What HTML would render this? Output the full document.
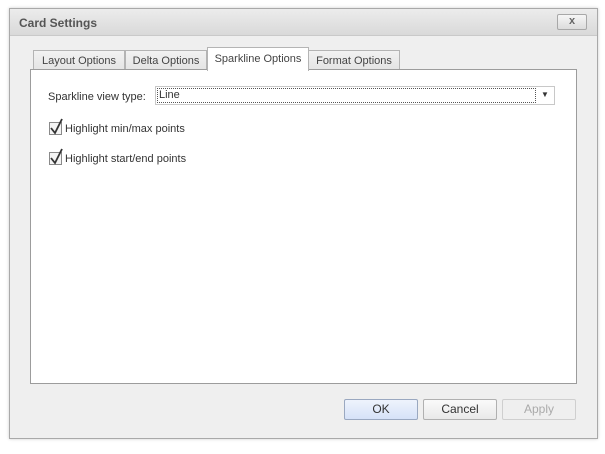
<!DOCTYPE html>
<html><head><style>
*{box-sizing:border-box;margin:0;padding:0}
body{width:605px;height:454px;background:#fff;font-family:"Liberation Sans",sans-serif;font-size:11px;color:#333;position:relative;overflow:hidden}
.abs{position:absolute}
.dlg{left:9px;top:8px;width:589px;height:431px;border:1px solid #a9a9a9;background:#efefef;box-shadow:0 0 3px #ccc}
.title{left:0;top:0;width:587px;height:27px;background:linear-gradient(#ececec,#d9d9d9);border-bottom:1px solid #c9c9c9}
.title span{position:absolute;left:9px;top:7px;font-weight:bold;font-size:12px;color:#555}
.close{left:547px;top:5px;width:30px;height:16px;border:1px solid #a8a8a8;border-radius:2px;background:linear-gradient(#f6f6f6,#dcdcdc);text-align:center;font-size:11px;line-height:13px;color:#666;font-weight:bold}
.tab{height:21px;border:1px solid #b4b4b4;border-bottom:none;background:linear-gradient(#f2f2f2,#e3e3e3);text-align:center;line-height:20px;color:#444}
.panel{left:20px;top:60px;width:547px;height:315px;background:#fff;border:1px solid #9c9c9c}
.btn{top:390px;height:21px;border:1px solid #b0b0b0;border-radius:2px;background:linear-gradient(#fafafa,#e9e9e9);text-align:center;line-height:19px;font-size:12px;color:#333}
.cb{width:13px;height:13px;border:1px solid #8a8a8a;background:#f4f4f4}
</style></head><body>
<div class="abs dlg">
 <div class="abs title"><span>Card Settings</span></div>
 <div class="abs close">x</div>
 <div class="abs tab" style="left:23px;top:41px;width:92px">Layout Options</div>
 <div class="abs tab" style="left:115px;top:41px;width:82px">Delta Options</div>
 <div class="abs tab" style="left:306px;top:41px;width:92px;left:298px">Format Options</div>
 <div class="abs panel"></div>
 <div class="abs tab" style="left:197px;top:38px;width:102px;height:24px;background:#fff;line-height:22px;z-index:2">Sparkline Options</div>
 <div class="abs" style="left:38px;top:82px">Sparkline view type:</div>
 <div class="abs" style="left:145px;top:77px;width:400px;height:19px;border:1px solid #c8c8c8;background:#fff">
  <div class="abs" style="left:1px;top:1px;width:379px;height:15px;border:1px dotted #555;padding-left:1px;line-height:13px">Line</div>
  <div class="abs" style="left:385px;top:3px;font-size:8px;color:#333">&#9660;</div>
 </div>
 <div class="abs cb" style="left:39px;top:113px"></div>
 <svg class="abs" style="left:38px;top:108px" width="16" height="19"><path d="M3 11 L7 16 L14 2" stroke="#333" stroke-width="1.8" fill="none"/></svg>
 <div class="abs" style="left:55px;top:114px">Highlight min/max points</div>
 <div class="abs cb" style="left:39px;top:143px"></div>
 <svg class="abs" style="left:38px;top:138px" width="16" height="19"><path d="M3 11 L7 16 L14 2" stroke="#333" stroke-width="1.8" fill="none"/></svg>
 <div class="abs" style="left:55px;top:144px">Highlight start/end points</div>
 <div class="abs btn" style="left:334px;width:74px;background:linear-gradient(#eef3fc,#d6e2f8);border-color:#9aa8c0">OK</div>
 <div class="abs btn" style="left:413px;width:74px">Cancel</div>
 <div class="abs btn" style="left:492px;width:74px;color:#aaa;border-color:#cfcfcf;background:#efefef">Apply</div>
</div>
</body></html>
